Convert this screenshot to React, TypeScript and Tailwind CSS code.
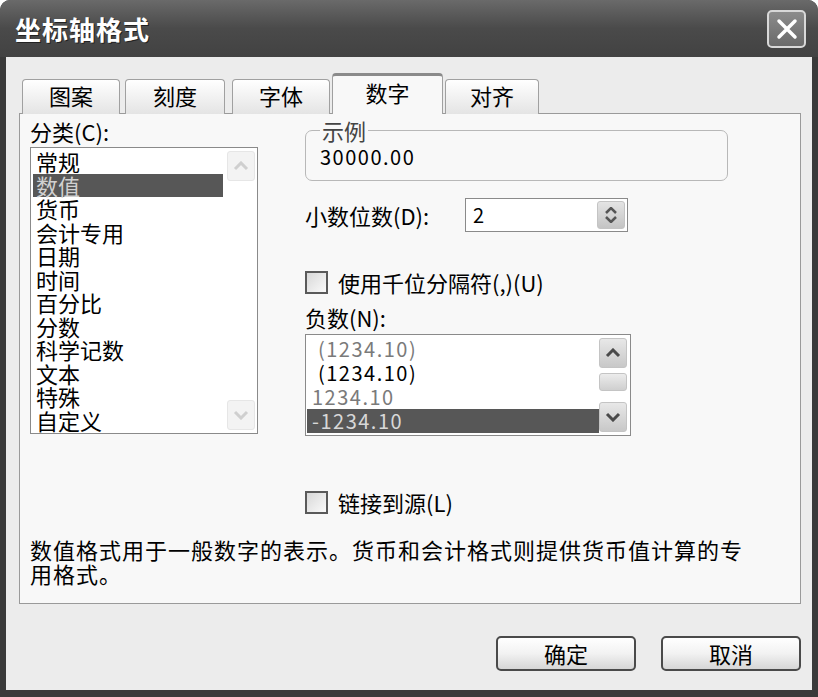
import React from "react";

const cjk = { fontFamily: '"Noto Sans CJK SC", "Noto Sans", sans-serif' };

function Chevron({ up, faded }: { up?: boolean; faded?: boolean }) {
  return (
    <svg width="16" height="10" viewBox="0 0 16 10">
      <path
        d={up ? "M2 8 L8 2 L14 8" : "M2 2 L8 8 L14 2"}
        fill="none"
        stroke={faded ? "#cfcfcf" : "#4a4a4a"}
        strokeWidth="3"
      />
    </svg>
  );
}

function ScrollBtn({ up, faded }: { up?: boolean; faded?: boolean }) {
  return (
    <div
      className={
        "flex h-[30px] w-[28px] items-center justify-center rounded-[3px] border " +
        (faded
          ? "border-[#e6e6e6] bg-[#f3f3f3]"
          : "border-[#c4c4c4] bg-gradient-to-b from-[#e8e8e8] to-[#c8c8c8]")
      }
    >
      <Chevron up={up} faded={faded} />
    </div>
  );
}

function CheckBox() {
  return (
    <div className="h-[23px] w-[23px] border-2 border-[#5a5a5a] bg-gradient-to-br from-[#d8d8d8] to-[#fafafa]" />
  );
}

export default function App() {
  const cats = ["常规", "数值", "货币", "会计专用", "日期", "时间", "百分比", "分数", "科学记数", "文本", "特殊", "自定义"];
  const negs = [
    { t: "\u00a0(1234.10)", c: "text-[#7a7a7a]" },
    { t: "\u00a0(1234.10)", c: "text-black" },
    { t: "1234.10", c: "text-[#7a7a7a]" },
    { t: "-1234.10", c: "bg-[#575757] text-[#d8d8d8]" },
  ];
  const tabs = [
    { t: "图案", w: "w-[98px]", m: "ml-[3px]" },
    { t: "刻度", w: "w-[100px]", m: "ml-[5px]" },
    { t: "字体", w: "w-[98px]", m: "ml-[7px]" },
  ];

  return (
    <div
      className="flex h-[697px] w-[818px] flex-col overflow-hidden rounded-t-[10px] bg-[#3a3a3a] text-[22px] text-black"
      style={cjk}
    >
      {/* title bar */}
      <div className="flex h-[57px] shrink-0 items-center justify-between bg-gradient-to-b from-[#6a6a6a] via-[#4a4a4a] to-[#424242] pl-[15px] pr-[12px]">
        <span className="text-[26px] font-bold tracking-[1px] text-white [text-shadow:1px_1px_0_#222]">
          坐标轴格式
        </span>
        <div className="flex h-[38px] w-[39px] items-center justify-center rounded-[5px] border-2 border-[#d8d8d8] bg-gradient-to-b from-[#8c8c8c] to-[#6a6a6a]">
          <svg width="22" height="22" viewBox="0 0 22 22">
            <path d="M3 3 L19 19 M19 3 L3 19" stroke="white" strokeWidth="3.5" strokeLinecap="round" />
          </svg>
        </div>
      </div>

      {/* body */}
      <div className="mx-[6px] mb-[7px] flex flex-1 flex-col bg-[#ececec] pl-[13px] pr-[11px] pt-[16px]">
        {/* tabs */}
        <div className="relative z-10 flex h-[41px] items-end">
          {tabs.map((tb) => (
            <div
              key={tb.t}
              className={`${tb.w} ${tb.m} flex h-[35px] items-center justify-center rounded-t-[4px] border border-b-0 border-[#a0a0a0] bg-gradient-to-b from-[#ffffff] to-[#e4e4e4] pb-[4px]`}
            >
              {tb.t}
            </div>
          ))}
          <div className="ml-[2px] flex h-[41px] w-[111px] items-center justify-center rounded-t-[4px] border border-b-0 border-t-[3px] border-[#a0a0a0] border-t-[#8a8a8a] bg-[#f8f8f8] pb-[6px]">
            数字
          </div>
          <div className="ml-[2px] flex h-[35px] w-[94px] items-center justify-center rounded-t-[4px] border border-b-0 border-[#a0a0a0] bg-gradient-to-b from-[#ffffff] to-[#e4e4e4] pb-[4px]">
            对齐
          </div>
        </div>

        {/* panel */}
        <div className="-mt-px flex h-[491px] flex-col border border-[#9a9a9a] bg-[#f8f8f8]">
          <div className="flex">
            {/* left column */}
            <div className="ml-[10px] flex w-[228px] flex-col pt-[5px]">
              <div className="h-[24px] leading-[24px]">分类(C):</div>
              <div className="mt-[4px] flex h-[287px] border border-[#8a8a8a] bg-white">
                <div className="flex flex-1 flex-col pl-[5px] pr-[4px] pt-[2px]">
                  {cats.map((c, i) => (
                    <div
                      key={c}
                      className={
                        "-ml-[3px] h-[23.5px] pl-[3px] leading-[23.5px] " +
                        (i === 1 ? "bg-[#575757] text-[#d0d0d0]" : "")
                      }
                    >
                      {c}
                    </div>
                  ))}
                </div>
                <div className="flex w-[30px] flex-col justify-between py-[3px] pr-[2px]">
                  <ScrollBtn up faded />
                  <ScrollBtn faded />
                </div>
              </div>
            </div>

            {/* right column */}
            <div className="ml-[47px] flex flex-col">
              <fieldset className="mt-[4px] h-[63px] w-[423px] rounded-[7px] border border-[#b8b8b8] px-[14px]">
                <legend className="h-[24px] px-[2px] leading-[24px] text-[#444]">示例</legend>
                <div className="mt-[3px] text-[20px] leading-[24px] tracking-[1.5px]">30000.00</div>
              </fieldset>

              <div className="mt-[17px] flex h-[34px] items-center">
                <span className="w-[160px]">小数位数(D):</span>
                <div className="flex h-[34px] w-[163px] items-center justify-between border border-[#8a8a8a] bg-white pl-[7px] pr-[2px]">
                  <span className="text-[20px]">2</span>
                  <div className="flex h-[28px] w-[28px] flex-col items-center justify-center gap-[2px] rounded-[3px] border border-[#c4c4c4] bg-gradient-to-b from-[#e4e4e4] to-[#c4c4c4]">
                    <svg width="12" height="7" viewBox="0 0 12 7">
                      <path d="M1 6 L6 1 L11 6" fill="none" stroke="#555" strokeWidth="2.5" />
                    </svg>
                    <svg width="12" height="7" viewBox="0 0 12 7">
                      <path d="M1 1 L6 6 L11 1" fill="none" stroke="#555" strokeWidth="2.5" />
                    </svg>
                  </div>
                </div>
              </div>

              <div className="mt-[39px] flex h-[23px] items-center gap-[10px]">
                <CheckBox />
                <span>使用千位分隔符(,)(U)</span>
              </div>

              <div className="mt-[12px] h-[22px] leading-[22px]">负数(N):</div>

              <div className="mt-[6px] flex h-[102px] w-[326px] border border-[#8a8a8a] bg-white">
                <div className="flex flex-1 flex-col pl-[1px] pt-[2px]">
                  {negs.map((n, i) => (
                    <div key={i} className={`h-[24px] pl-[5px] text-[20px] leading-[24px] tracking-[1.5px] ${n.c}`}>
                      {n.t}
                    </div>
                  ))}
                </div>
                <div className="flex w-[31px] flex-col py-[3px] pr-[2px]">
                  <ScrollBtn up />
                  <div className="mt-[5px] h-[18px] w-[28px] rounded-[3px] border border-[#c4c4c4] bg-gradient-to-b from-[#ececec] to-[#cfcfcf]" />
                  <div className="mt-auto">
                    <ScrollBtn />
                  </div>
                </div>
              </div>
            </div>
          </div>

          <div className="ml-[285px] mt-[55px] flex h-[23px] items-center gap-[10px]">
            <CheckBox />
            <span>链接到源(L)</span>
          </div>

          <div className="ml-[10px] mt-[23px] leading-[24px] tracking-[1px]">
            数值格式用于一般数字的表示。货币和会计格式则提供货币值计算的专
            <br />
            用格式。
          </div>
        </div>

        {/* buttons */}
        <div className="mt-[32px] flex justify-end gap-[25px]">
          {["确定", "取消"].map((b) => (
            <div
              key={b}
              className="flex h-[35px] w-[140px] items-center justify-center rounded-[5px] border-2 border-[#4a4a4a] bg-gradient-to-b from-[#ffffff] via-[#f2f2f2] to-[#d6d6d6]"
            >
              {b}
            </div>
          ))}
        </div>
      </div>
    </div>
  );
}
